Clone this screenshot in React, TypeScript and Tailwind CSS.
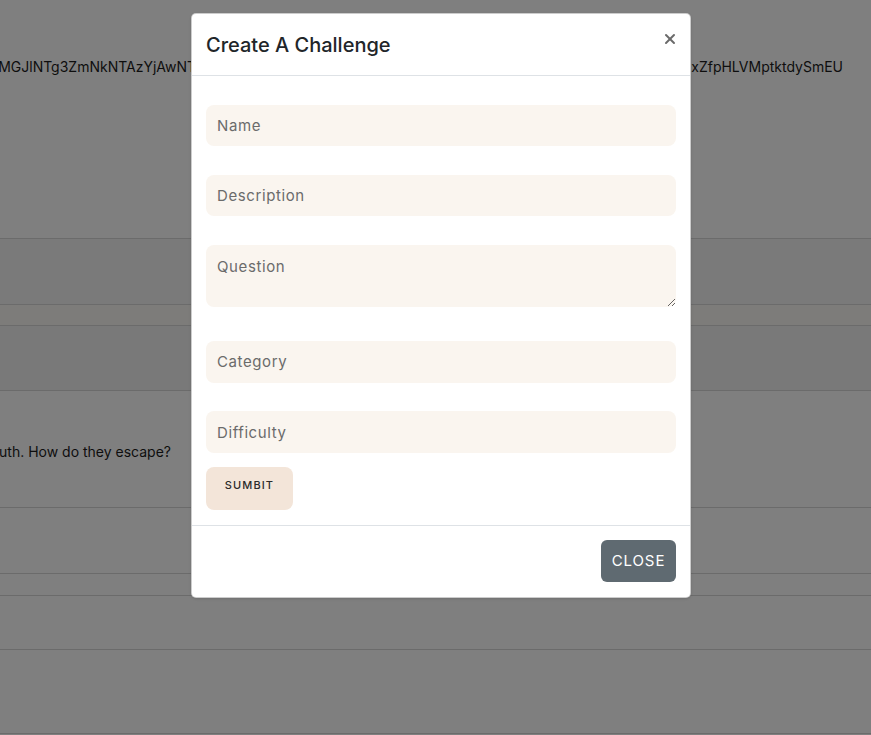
import { X } from "lucide-react";

const fields = [
  { name: "name", label: "Name" },
  { name: "description", label: "Description" },
];

const CreateChallengeModal = () => {
  return (
    <div className="w-[500px] bg-white rounded-[5px] border border-black/20 shadow-sm flex flex-col">
      <div className="flex items-start justify-between px-[14px] pt-[16px] pb-[15px] border-b border-[#dee2e6]">
        <h5 className="text-[20px] leading-[30px] font-medium text-[#212529]">Create A Challenge</h5>
        <button className="mt-[1px] -mr-[2px] text-[#6a6a6a]">
          <X size={16} strokeWidth={3} />
        </button>
      </div>

      <div className="flex flex-col px-[14px] pt-[29px] pb-[15px]">
        {fields.map((f) => (
          <input
            key={f.name}
            placeholder={f.label}
            className="h-[41px] mb-[29px] rounded-[8px] bg-[#faf5ef] px-[11px] text-[15px] tracking-[0.6px] text-[#333] placeholder:text-[#6b6b6b] outline-none"
          />
        ))}
        <textarea
          placeholder="Question"
          className="h-[62px] mb-[34px] rounded-[8px] bg-[#faf5ef] px-[11px] pt-[11px] text-[15px] tracking-[0.6px] text-[#333] placeholder:text-[#6b6b6b] outline-none block"
        />
        <input
          placeholder="Category"
          className="h-[42px] mb-[28px] rounded-[8px] bg-[#faf5ef] px-[11px] pb-[2px] text-[15px] tracking-[0.6px] text-[#333] placeholder:text-[#6b6b6b] outline-none"
        />
        <input
          placeholder="Difficulty"
          className="h-[42px] mb-[14px] rounded-[8px] bg-[#faf5ef] px-[11px] text-[15px] tracking-[0.6px] text-[#333] placeholder:text-[#6b6b6b] outline-none"
        />
        <div>
          <button className="h-[43px] w-[87px] rounded-[8px] bg-[#f3e5d9] pb-[6px] text-[11px] font-medium tracking-[1.1px] text-[#2b2b2b]">
            SUMBIT
          </button>
        </div>
      </div>

      <div className="flex justify-end border-t border-[#dee2e6] pt-[14px] pb-[15px] pr-[14px]">
        <button className="h-[42px] w-[75px] rounded-[6px] bg-[#5f6a71] text-[15px] tracking-[0.9px] text-white">
          CLOSE
        </button>
      </div>
    </div>
  );
};

export default function App() {
  return (
    <div className="relative min-h-[735px] overflow-hidden bg-white font-['Inter',sans-serif] text-[#1c1c1c]">
      {/* page behind the dialog */}
      <div className="flex flex-col">
        <div className="h-[239px] border-b border-[#d6d6d6] flex justify-end pr-[28px] pt-[57px] overflow-hidden">
          <span className="whitespace-nowrap text-[14px] leading-[20px]">
            MGJlNTg3ZmNkNTAzYjAwNTI4ZDFhOTk2YmE3NGQ1ZjQ2OTRhMDk4ZDUxNDM5OGZiYTc1ZjBhM2Y4NjlxZfpHLVMptktdySmEU
          </span>
        </div>
        <div className="h-[66px] bg-[#f5f5f5] border-b border-[#d6d6d6]" />
        <div className="h-[21px] bg-[#faf8f5] border-b border-[#d6d6d6]" />
        <div className="h-[65px] bg-[#f2f2f2] border-b border-[#d6d6d6]" />
        <div className="h-[117px] border-b border-[#d6d6d6] pt-[51px]">
          <div className="w-[171px] flex justify-end overflow-hidden">
            <span className="whitespace-nowrap text-[14px] leading-[20px]">
              The sun rises in the south. How do they escape?
            </span>
          </div>
        </div>
        <div className="h-[66px] border-b border-[#d6d6d6]" />
        <div className="h-[22px] border-b border-[#d6d6d6]" />
        <div className="h-[54px] border-b border-[#d6d6d6]" />
        <div className="h-[84px] border-b border-[#d6d6d6]" />
      </div>

      {/* backdrop */}
      <div className="absolute inset-0 bg-black/50" />

      <div className="absolute inset-0 flex justify-center pt-[13px]">
        <div className="ml-[11px]">
          <CreateChallengeModal />
        </div>
      </div>
    </div>
  );
}
